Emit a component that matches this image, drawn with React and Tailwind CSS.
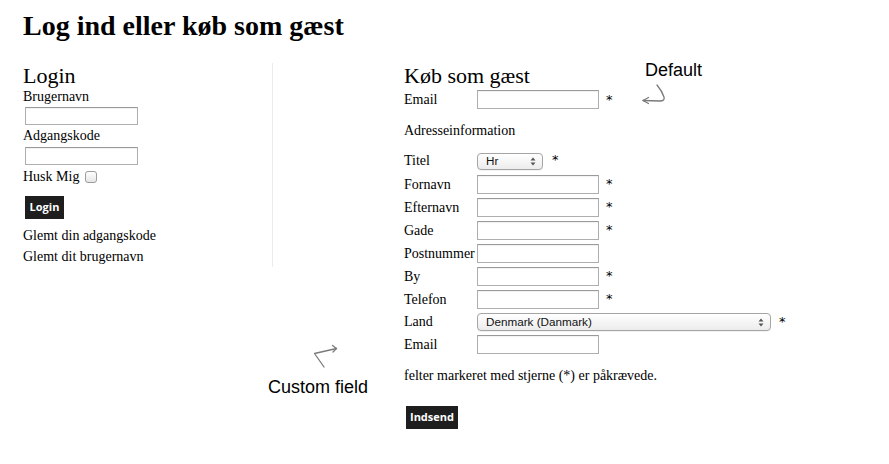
import React from "react";

function Input({ className = "" }) {
  return (
    <div
      className={
        "border border-[#aeaeae] border-t-[#9a9a9a] bg-white shadow-[inset_0_1px_1px_rgba(0,0,0,0.06)] " +
        className
      }
    />
  );
}

function Arrows() {
  return (
    <svg width="6" height="9" viewBox="0 0 6 9" className="shrink-0">
      <path d="M3 0.5 L5.5 3.5 L0.5 3.5 Z" fill="#555" />
      <path d="M3 8.5 L5.5 5.5 L0.5 5.5 Z" fill="#555" />
    </svg>
  );
}

function Select({ text, className = "" }) {
  return (
    <div
      className={
        "flex items-center justify-between rounded-[4px] border border-[#a5a5a5] bg-gradient-to-b from-white to-[#ececec] pl-[8px] pr-[6px] font-['Liberation_Sans',sans-serif] text-[11.7px] leading-none text-[#111] shadow-[0_1px_0_rgba(0,0,0,0.05)] " +
        className
      }
    >
      <span>{text}</span>
      <Arrows />
    </div>
  );
}

function Star({ className = "" }) {
  return (
    <span className={"font-['DejaVu_Sans',sans-serif] text-[13px] leading-4 self-start mt-[3px] " + className}>
      *
    </span>
  );
}

function Row({ label, children, h = "h-[23px]" }) {
  return (
    <div className={"flex items-center " + h}>
      <span className="w-[73px] text-[14px] leading-4 whitespace-nowrap">{label}</span>
      {children}
    </div>
  );
}

function TextRow({ label, required }) {
  return (
    <Row label={label}>
      <Input className="w-[122px] h-[19px]" />
      {required && <Star className="ml-[7px]" />}
    </Row>
  );
}

export default function App() {
  return (
    <div className="relative w-[889px] h-[464px] overflow-hidden bg-white text-black font-['Liberation_Serif',serif]">
      <div className="pl-[23px] pt-[10px]">
        <h1 className="text-[28px] font-bold leading-[32px]">Log ind eller køb som gæst</h1>
        <div className="flex items-start mt-[21px]">
          {/* Left column */}
          <div className="w-[250px] border-r border-[#ececec]">
            <h2 className="text-[22px] leading-[26px]">Login</h2>
            <div className="text-[14px] leading-4">Brugernavn</div>
            <Input className="mt-[2px] ml-[2px] w-[113px] h-[18px]" />
            <div className="mt-[3px] text-[14px] leading-4">Adgangskode</div>
            <Input className="mt-[3px] ml-[2px] w-[113px] h-[18px]" />
            <div className="mt-[4px] flex items-center text-[14px] leading-4">
              <span>Husk Mig</span>
              <span className="ml-[6px] inline-block w-[12px] h-[12px] rounded-[3px] border border-[#9c9c9c] bg-gradient-to-b from-white to-[#e6e6e6]" />
            </div>
            <div className="mt-[11px] ml-[2px] flex h-[23px] w-[39px] items-center justify-center bg-[#1e1e1e] font-['Open_Sans',sans-serif] text-[11px] font-bold text-white">
              Login
            </div>
            <div className="mt-[7px] text-[14px] leading-5">Glemt din adgangskode</div>
            <div className="mt-[1px] text-[14px] leading-5">Glemt dit brugernavn</div>
          </div>

          {/* Right column */}
          <div className="ml-[131px]">
            <h2 className="text-[22px] leading-[26px]">Køb som gæst</h2>
            <Row label="Email" h="h-[21px]">
              <Input className="w-[122px] h-[19px]" />
              <Star className="ml-[7px] mt-[2px]" />
            </Row>
            <div className="mt-[13px] text-[14px] leading-4">Adresseinformation</div>
            <div className="mt-[10px]">
              <Row label="Titel" h="h-[24px]">
                <Select text="Hr" className="w-[66px] h-[17px]" />
                <Star className="ml-[9px] mt-[1px]" />
              </Row>
              <TextRow label="Fornavn" required />
              <TextRow label="Efternavn" required />
              <TextRow label="Gade" required />
              <TextRow label="Postnummer" />
              <TextRow label="By" required />
              <TextRow label="Telefon" required />
              <Row label="Land" h="h-[22px]">
                <Select text="Denmark (Danmark)" className="w-[294px] h-[18px]" />
                <Star className="ml-[8px] mt-[1px]" />
              </Row>
              <TextRow label="Email" />
            </div>
            <div className="mt-[12px] text-[14px] leading-4">felter markeret med stjerne (*) er påkrævede.</div>
            <div className="mt-[22px] ml-[2px] flex h-[23px] w-[52px] items-center justify-center bg-[#1e1e1e] font-['Open_Sans',sans-serif] text-[11px] font-bold text-white">
              Indsend
            </div>
          </div>
        </div>
      </div>

      {/* Annotations */}
      <div className="absolute left-[645px] top-[59px] font-['Liberation_Sans',sans-serif] text-[18px] leading-[22px] text-black">
        Default
      </div>
      <svg className="absolute left-0 top-0" width="889" height="464" viewBox="0 0 889 464" fill="none">
        <path d="M657 85 Q662 91 664 97 Q665 101 660 101 L643 100.5" stroke="#7a7a7a" strokeWidth="1.3" strokeLinecap="round" />
        <path d="M648.5 97.5 L643 100.5 L648.5 103.5" stroke="#7a7a7a" strokeWidth="1.3" strokeLinecap="round" strokeLinejoin="round" />
        <path d="M324 367 L314.5 353.5 L336.5 348.5" stroke="#7a7a7a" strokeWidth="1.3" strokeLinecap="round" strokeLinejoin="round" />
        <path d="M332.5 345.5 L336.5 348.5 L333 352" stroke="#7a7a7a" strokeWidth="1.3" strokeLinecap="round" strokeLinejoin="round" />
      </svg>
      <div className="absolute left-[268px] top-[376px] font-['Liberation_Sans',sans-serif] text-[18px] leading-[22px] text-black">
        Custom field
      </div>
    </div>
  );
}
